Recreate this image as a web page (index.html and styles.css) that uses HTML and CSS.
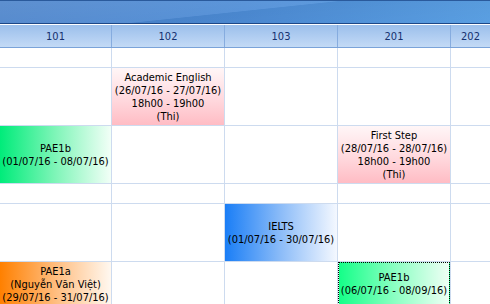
FILE: index.html
```html
<!DOCTYPE html>
<html>
<head>
<meta charset="utf-8">
<link rel="stylesheet" href="styles.css">
</head>
<body>
<div class="topbar"></div>
<div class="sep"></div>
<div class="header">
  <div class="hcell">101</div>
  <div class="hcell">102</div>
  <div class="hcell">103</div>
  <div class="hcell">201</div>
  <div class="hcell last">202</div>
</div>
<div class="grid">
  <!-- row 1 -->
  <div class="cell"></div>
  <div class="cell"></div>
  <div class="cell"></div>
  <div class="cell"></div>
  <div class="cell"></div>
  <!-- row 2 -->
  <div class="cell"></div>
  <div class="cell"><div class="ev pink"><span>Academic English</span><span>(26/07/16 - 27/07/16)</span><span>18h00 - 19h00</span><span>(Thi)</span></div></div>
  <div class="cell"></div>
  <div class="cell"></div>
  <div class="cell"></div>
  <!-- row 3 -->
  <div class="cell"><div class="ev green"><span>PAE1b</span><span>(01/07/16 - 08/07/16)</span></div></div>
  <div class="cell"></div>
  <div class="cell"></div>
  <div class="cell"><div class="ev pink"><span>First Step</span><span>(28/07/16 - 28/07/16)</span><span>18h00 - 19h00</span><span>(Thi)</span></div></div>
  <div class="cell"></div>
  <!-- row 4 -->
  <div class="cell"></div>
  <div class="cell"></div>
  <div class="cell"></div>
  <div class="cell"></div>
  <div class="cell"></div>
  <!-- row 5 -->
  <div class="cell"></div>
  <div class="cell"></div>
  <div class="cell"><div class="ev blue"><span>IELTS</span><span>(01/07/16 - 30/07/16)</span></div></div>
  <div class="cell"></div>
  <div class="cell"></div>
  <!-- row 6 -->
  <div class="cell"><div class="ev orange"><span>PAE1a</span><span>(Nguyễn Văn Việt)</span><span>(29/07/16 - 31/07/16)</span><span>18h00 - 21h00</span></div></div>
  <div class="cell"></div>
  <div class="cell"></div>
  <div class="cell"><div class="ev green sel"><span>PAE1b</span><span>(06/07/16 - 08/09/16)</span><span>&nbsp;</span></div></div>
  <div class="cell"></div>
</div>
</body>
</html>
```
FILE: styles.css
```css
html, body {
  margin: 0;
  padding: 0;
  width: 490px;
  height: 304px;
  overflow: hidden;
  background: #ffffff;
}
body {
  font-family: "DejaVu Sans Condensed", "DejaVu Sans", sans-serif;
  font-stretch: condensed;
  font-size: 11px;
  color: #000;
}
.topbar {
  height: 22px;
  border-top: 1px solid #2a5a9c;
  border-bottom: 1px solid #1d4786;
  background:
    linear-gradient(174deg, rgba(255,255,255,0.12) 0%, rgba(255,255,255,0.07) 48%, rgba(0,0,0,0.04) 49%, rgba(0,0,0,0) 100%),
    linear-gradient(90deg, #4780c9 0%, #4d8cd6 50%, #5a9fe2 100%);
}
.sep {
  height: 1px;
  background: #ffffff;
}
.header {
  display: grid;
  grid-template-columns: 112px 113px 113px 113px 1fr;
  width: 490px;
  height: 23px;
  box-sizing: border-box;
  border-bottom: 1px solid #7aa3d9;
  background: linear-gradient(180deg, #9bbfeb 0%, #b3cff2 60%, #c3daf5 100%);
}
.hcell {
  box-sizing: border-box;
  border-right: 1px solid #86acdf;
  display: flex;
  align-items: center;
  justify-content: center;
  color: #15316f;
  font-size: 11px;
  padding-top: 1px;
}
.hcell.last {
  border-right: none;
}
.grid {
  display: grid;
  width: 490px;
  grid-template-columns: 112px 113px 113px 113px 1fr;
  grid-template-rows: 20px 58px 58px 20px 58px 58px;
}
.cell {
  box-sizing: border-box;
  border-right: 1px solid #cddbef;
  border-bottom: 1px solid #cddbef;
  display: flex;
  min-width: 0;
}
.cell:nth-child(5n) {
  border-right: none;
}
.ev {
  flex: 1;
  display: flex;
  flex-direction: column;
  justify-content: center;
  align-items: center;
  line-height: 13px;
  text-align: center;
  white-space: nowrap;
  overflow: hidden;
}
.pink {
  background: linear-gradient(180deg, #fff6f7 0%, #ffd9de 55%, #ffbcc4 100%);
}
.green {
  background: linear-gradient(90deg, #00ec7a 0%, #7ff5b8 50%, #f2fff7 100%);
}
.blue {
  background: linear-gradient(90deg, #1a7ef6 0%, #8cbcf8 50%, #f4f8ff 100%);
}
.orange {
  background: linear-gradient(90deg, #ff8000 0%, #ffbd7f 50%, #fff8f0 100%);
}
.sel {
  box-sizing: border-box;
  border: 1px dotted #000;
  background: linear-gradient(90deg, #14ff88 0%, #8affc2 50%, #effff5 100%);
}
```
